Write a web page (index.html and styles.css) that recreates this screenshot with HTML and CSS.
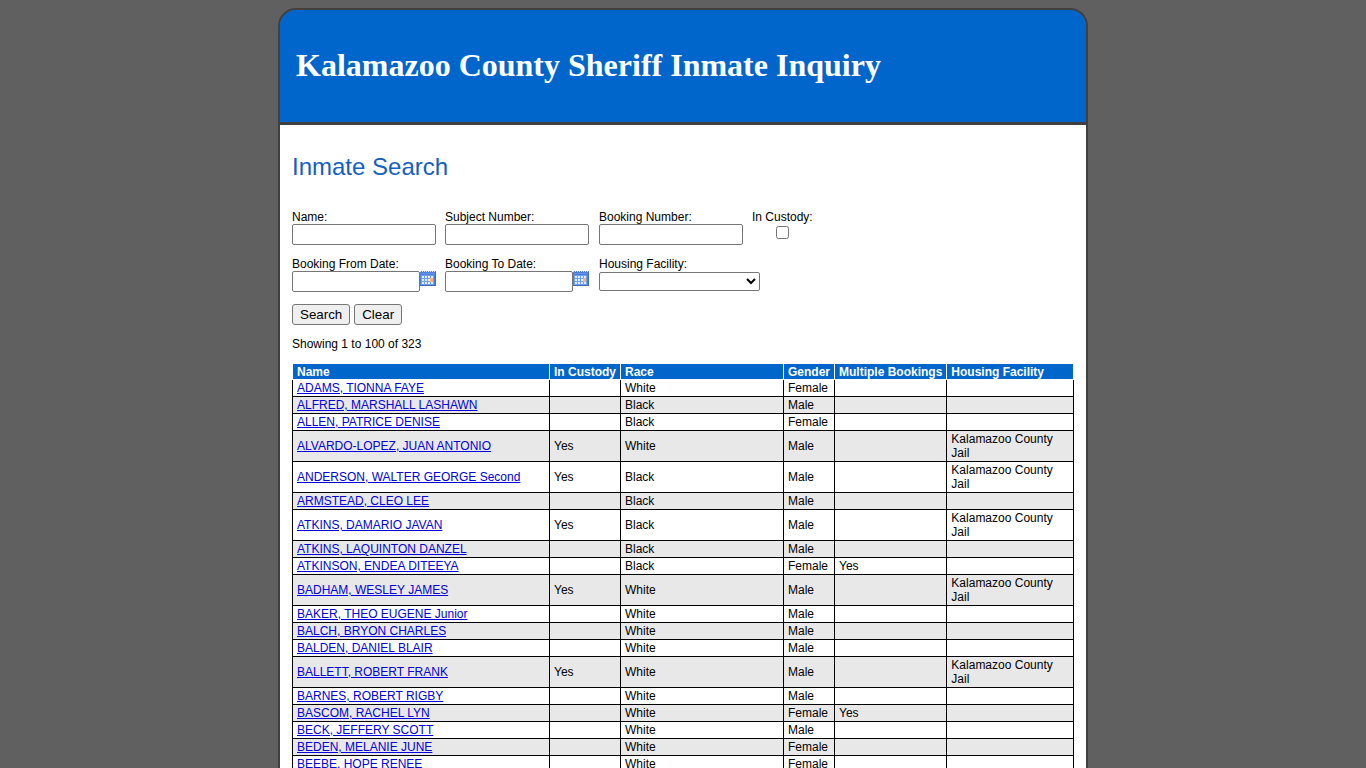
FILE: index.html
```html
<!DOCTYPE html>
<html lang="en">
<head>
    <meta charset="UTF-8">
    <meta name="viewport" content="width=device-width, initial-scale=1.0">
    <title>Inmate Search</title>
    <link rel="stylesheet" href="styles.css">
</head>
<body>
    <svg class="sprite" aria-hidden="true">
        <symbol id="calendar" viewBox="0 0 16 15">
            <rect width="16" height="15" fill="#4f7fd6"/>
            <path d="M0 0.500H16" stroke="#dce8fb" stroke-dasharray="1 1"/>
            <path d="M1 2.500H15" stroke="#5f92ea"/>
            <rect x="1" y="4" width="13" height="10" fill="#6f9ff0"/>
            <path d="M2 5h2v2H2zM5 5h2v2H5zM8 5h2v2H8zM11 5h2v2H11zM2 8h2v2H2zM5 8h2v2H5zM8 8h2v2H8zM2 11h2v2H2zM5 11h2v2H5zM8 11h2v2H8zM11 11h2v2H11z" fill="#e2ecff"/>
            <rect x="10" y="7" width="3" height="4" fill="#f7b27c"/>
            <path d="M0 14.500H16M15.500 1V15" stroke="#3d6cc2"/>
        </symbol>
    </svg>

    <div class="page">
        <div class="header">
            <h1>Kalamazoo County Sheriff Inmate Inquiry</h1>
        </div>

        <div class="main">
            <h2>Inmate Search</h2>

            <form onsubmit="return false">
                <div class="fields">
                    <div class="field">
                        <label for="name">Name:</label>
                        <input type="text" id="name">
                    </div>
                    <div class="field">
                        <label for="subjectNumber">Subject Number:</label>
                        <input type="text" id="subjectNumber">
                    </div>
                    <div class="field">
                        <label for="bookingNumber">Booking Number:</label>
                        <input type="text" id="bookingNumber">
                    </div>
                    <div class="field check">
                        <label for="inCustody">In Custody:</label>
                        <input type="checkbox" id="inCustody">
                    </div>
                    <div class="field">
                        <label for="fromDate">Booking From Date:</label>
                        <div class="date">
                            <input type="text" id="fromDate">
                            <button type="button" class="calendar" aria-label="Pick from date"><svg><use href="#calendar"/></svg></button>
                        </div>
                    </div>
                    <div class="field">
                        <label for="toDate">Booking To Date:</label>
                        <div class="date">
                            <input type="text" id="toDate">
                            <button type="button" class="calendar" aria-label="Pick to date"><svg><use href="#calendar"/></svg></button>
                        </div>
                    </div>
                    <div class="field facility">
                        <label for="facility">Housing Facility:</label>
                        <select id="facility">
                            <option></option>
                        </select>
                    </div>
                </div>

                <div class="buttons">
                    <button type="submit">Search</button>
                    <button type="reset">Clear</button>
                </div>
            </form>

            <p class="count">Showing 1 to 100 of 323</p>

            <table>
                <thead>
                    <tr><th class="col-name">Name</th><th class="col-custody">In Custody</th><th class="col-race">Race</th><th class="col-gender">Gender</th><th class="col-multiple">Multiple Bookings</th><th>Housing Facility</th></tr>
                </thead>
                <tbody>
                    <tr><td><a href="#">ADAMS, TIONNA FAYE</a></td><td></td><td>White</td><td>Female</td><td></td><td></td></tr>
                    <tr><td><a href="#">ALFRED, MARSHALL LASHAWN</a></td><td></td><td>Black</td><td>Male</td><td></td><td></td></tr>
                    <tr><td><a href="#">ALLEN, PATRICE DENISE</a></td><td></td><td>Black</td><td>Female</td><td></td><td></td></tr>
                    <tr><td><a href="#">ALVARDO-LOPEZ, JUAN ANTONIO</a></td><td>Yes</td><td>White</td><td>Male</td><td></td><td>Kalamazoo County Jail</td></tr>
                    <tr><td><a href="#">ANDERSON, WALTER GEORGE Second</a></td><td>Yes</td><td>Black</td><td>Male</td><td></td><td>Kalamazoo County Jail</td></tr>
                    <tr><td><a href="#">ARMSTEAD, CLEO LEE</a></td><td></td><td>Black</td><td>Male</td><td></td><td></td></tr>
                    <tr><td><a href="#">ATKINS, DAMARIO JAVAN</a></td><td>Yes</td><td>Black</td><td>Male</td><td></td><td>Kalamazoo County Jail</td></tr>
                    <tr><td><a href="#">ATKINS, LAQUINTON DANZEL</a></td><td></td><td>Black</td><td>Male</td><td></td><td></td></tr>
                    <tr><td><a href="#">ATKINSON, ENDEA DITEEYA</a></td><td></td><td>Black</td><td>Female</td><td>Yes</td><td></td></tr>
                    <tr><td><a href="#">BADHAM, WESLEY JAMES</a></td><td>Yes</td><td>White</td><td>Male</td><td></td><td>Kalamazoo County Jail</td></tr>
                    <tr><td><a href="#">BAKER, THEO EUGENE Junior</a></td><td></td><td>White</td><td>Male</td><td></td><td></td></tr>
                    <tr><td><a href="#">BALCH, BRYON CHARLES</a></td><td></td><td>White</td><td>Male</td><td></td><td></td></tr>
                    <tr><td><a href="#">BALDEN, DANIEL BLAIR</a></td><td></td><td>White</td><td>Male</td><td></td><td></td></tr>
                    <tr><td><a href="#">BALLETT, ROBERT FRANK</a></td><td>Yes</td><td>White</td><td>Male</td><td></td><td>Kalamazoo County Jail</td></tr>
                    <tr><td><a href="#">BARNES, ROBERT RIGBY</a></td><td></td><td>White</td><td>Male</td><td></td><td></td></tr>
                    <tr><td><a href="#">BASCOM, RACHEL LYN</a></td><td></td><td>White</td><td>Female</td><td>Yes</td><td></td></tr>
                    <tr><td><a href="#">BECK, JEFFERY SCOTT</a></td><td></td><td>White</td><td>Male</td><td></td><td></td></tr>
                    <tr><td><a href="#">BEDEN, MELANIE JUNE</a></td><td></td><td>White</td><td>Female</td><td></td><td></td></tr>
                    <tr><td><a href="#">BEEBE, HOPE RENEE</a></td><td></td><td>White</td><td>Female</td><td></td><td></td></tr>
                </tbody>
            </table>
        </div>
    </div>
</body>
</html>
```
FILE: styles.css
```css
* {
    box-sizing: border-box;
}

body {
    margin: 8px;
    background-color: #606060;
    color: #000;
    font-family: Arial, "Liberation Sans", sans-serif;
    font-size: 12px;
    line-height: 14px;
}

.sprite {
    display: none;
}

.page {
    max-width: 810px;
    margin: 0 auto;
    border: 2px solid #404040;
    border-radius: 18px 18px 0 0;
    overflow: hidden;
}

.header {
    background-color: #0066cc;
    border-bottom: 3px solid #404040;
    padding: 37px 16px 38px;
}

h1 {
    margin: 0;
    color: #fff;
    font-family: "Times New Roman", "Liberation Serif", serif;
    font-size: 32px;
    line-height: 37px;
}

.main {
    background-color: #fff;
    padding: 28px 12px 12px;
}

h2 {
    margin: 0 0 29px;
    color: #1560bd;
    font-size: 24px;
    font-weight: normal;
    line-height: 28px;
}

.fields {
    display: grid;
    grid-template-columns: 153px 154px 153px auto;
    row-gap: 12px;
}

.field {
    display: flex;
    flex-direction: column;
    align-items: flex-start;
}

.field input[type="text"] {
    width: 144px;
    height: 21px;
    border: 1px solid #767676;
    border-radius: 2px;
}

.field.check {
    justify-self: start;
    align-items: center;
}

.field.check input {
    width: 13px;
    height: 13px;
    margin: 2px;
}

.field.facility {
    grid-column: span 2;
}

.date {
    display: flex;
    align-items: flex-start;
}

.field .date input[type="text"] {
    width: 128px;
}

.calendar {
    flex: none;
    width: 16px;
    height: 15px;
    padding: 0;
    border: none;
    background: none;
    cursor: pointer;
}

.calendar svg {
    display: block;
    width: 16px;
    height: 15px;
}

select {
    width: 161px;
    height: 19px;
    margin-top: 1px;
    background-color: #fff;
    border: 1px solid #767676;
    border-radius: 2px;
}

.buttons {
    display: flex;
    gap: 4px;
    margin: 12px 0;
}

.buttons button {
    height: 21px;
    padding: 0 7px;
    background-color: #efefef;
    border: 1px solid #767676;
    border-radius: 3px;
    color: #000;
    font-family: inherit;
}

.count {
    margin: 0 0 12px;
}

table {
    width: 100%;
    border-collapse: collapse;
}

th,
td {
    padding: 1px 4px;
    text-align: left;
}

th {
    padding-bottom: 0;
    background-color: #0066cc;
    border: 1px solid #fff;
    color: #fff;
    white-space: nowrap;
}

td {
    border: 1px solid #000;
}

tbody tr:nth-child(even) {
    background-color: #e8e8e8;
}

.col-name {
    width: 257px;
}

.col-custody {
    width: 71px;
}

.col-race {
    width: 163px;
}

.col-gender {
    width: 51px;
}

.col-multiple {
    width: 112px;
}

td a {
    color: #0000dd;
}
```
